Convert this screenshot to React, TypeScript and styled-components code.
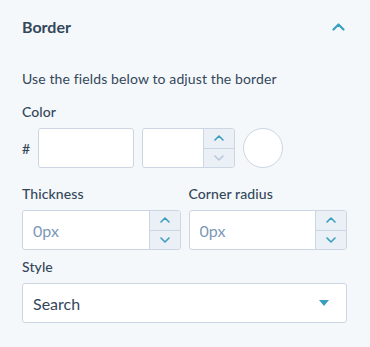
import React from "react";
import styled, { createGlobalStyle } from "styled-components";

const GlobalStyle = createGlobalStyle`
  body {
    margin: 0;
    background-color: #f5f8fa;
    font-family: Lato, "Open Sans", sans-serif;
    color: #33475b;
  }
`;

const Chevron = ({ up, color }: { up?: boolean; color: string }) => (
  <svg width="10" height="6" viewBox="0 0 10 6" fill="none">
    <path
      d={up ? "M1 5 L5 1 L9 5" : "M1 1 L5 5 L9 1"}
      stroke={color}
      strokeWidth="1.6"
      strokeLinecap="round"
      strokeLinejoin="round"
    />
  </svg>
);

const Stepper = ({ downDisabled }: { downDisabled?: boolean }) => (
  <StepperBox>
    <StepButton>
      <Chevron up color="#3a9fbf" />
    </StepButton>
    <StepButton>
      <Chevron color={downDisabled ? "#b9c8d8" : "#3a9fbf"} />
    </StepButton>
  </StepperBox>
);

export default function App() {
  return (
    <>
      <GlobalStyle />
      <Panel>
        <Header>
          <Title>Border</Title>
          <svg width="13" height="8" viewBox="0 0 13 8" fill="none">
            <path
              d="M1.5 6.5 L6.5 1.5 L11.5 6.5"
              stroke="#3a9fbf"
              strokeWidth="2.2"
              strokeLinecap="round"
              strokeLinejoin="round"
            />
          </svg>
        </Header>

        <Description>Use the fields below to adjust the border</Description>

        <Field $top={13}>
          <Label>Color</Label>
          <ColorRow>
            <Hash>#</Hash>
            <HexInput />
            <NumberField $width={93}>
              <FieldInput />
              <Stepper downDisabled />
            </NumberField>
            <Swatch />
          </ColorRow>
        </Field>

        <TwoColumns>
          <Field>
            <Label>Thickness</Label>
            <NumberField>
              <FieldInput placeholder="0px" />
              <Stepper />
            </NumberField>
          </Field>
          <Field>
            <Label>Corner radius</Label>
            <NumberField>
              <FieldInput placeholder="0px" />
              <Stepper />
            </NumberField>
          </Field>
        </TwoColumns>

        <Field $top={7}>
          <Label>Style</Label>
          <Select>
            <span>Search</span>
            <Caret />
          </Select>
        </Field>
      </Panel>
    </>
  );
}

const Panel = styled.div`
  padding: 15px 23px 24px 22px;
`;

const Header = styled.div`
  display: flex;
  justify-content: space-between;
  align-items: center;
  padding-right: 2px;
`;

const Title = styled.h2`
  margin: 0;
  font-size: 16px;
  line-height: 24px;
  font-weight: 700;
`;

const Description = styled.p`
  margin: 30px 0 0;
  font-size: 14px;
  line-height: 20px;
  letter-spacing: 0.12px;
`;

const Field = styled.div<{ $top?: number }>`
  min-width: 0;
  margin-top: ${(p) => p.$top ?? 0}px;
`;

const Label = styled.div`
  margin: 0 0 6px;
  font-size: 14px;
  line-height: 20px;
  font-weight: 500;
  letter-spacing: 0.1px;
`;

const ColorRow = styled.div`
  display: flex;
  align-items: center;
  gap: 8px;
`;

const Hash = styled.span`
  width: 8px;
  font-size: 14px;
  font-weight: 500;
`;

const inputBox = `
  box-sizing: border-box;
  height: 40px;
  border: 1px solid #cbd6e2;
  border-radius: 3px;
  background-color: #ffffff;
`;

const HexInput = styled.input`
  ${inputBox}
  width: 96px;
  outline: none;
`;

const NumberField = styled.div<{ $width?: number }>`
  ${inputBox}
  display: flex;
  width: ${(p) => (p.$width ? `${p.$width}px` : "100%")};
  overflow: hidden;
`;

const FieldInput = styled.input`
  flex: 1;
  width: 0;
  min-width: 0;
  border: none;
  outline: none;
  padding: 0 10px;
  font-family: Lato, "Open Sans", sans-serif;
  font-size: 16px;
  color: #33475b;
  background: transparent;

  &::placeholder {
    color: #7c98b6;
  }
`;

const StepperBox = styled.div`
  display: flex;
  flex-direction: column;
  width: 30px;
  flex-shrink: 0;
  border-left: 1px solid #cbd6e2;
  background-color: #eaf0f6;
`;

const StepButton = styled.div`
  flex: 1;
  display: flex;
  align-items: center;
  justify-content: center;

  & + & {
    border-top: 1px solid #cbd6e2;
  }
`;

const Swatch = styled.div`
  box-sizing: border-box;
  width: 40px;
  height: 40px;
  border-radius: 50%;
  border: 1px solid #cbd6e2;
  background-color: #ffffff;
`;

const TwoColumns = styled.div`
  display: grid;
  grid-template-columns: minmax(0, 1fr) minmax(0, 1fr);
  column-gap: 8px;
  margin-top: 16px;
`;

const Select = styled.div`
  ${inputBox}
  display: flex;
  align-items: center;
  justify-content: space-between;
  padding: 0 17px 0 10px;
  font-size: 16px;
`;

const Caret = styled.span`
  width: 0;
  height: 0;
  border-left: 5.5px solid transparent;
  border-right: 5.5px solid transparent;
  border-top: 6px solid #3a9fbf;
`;
